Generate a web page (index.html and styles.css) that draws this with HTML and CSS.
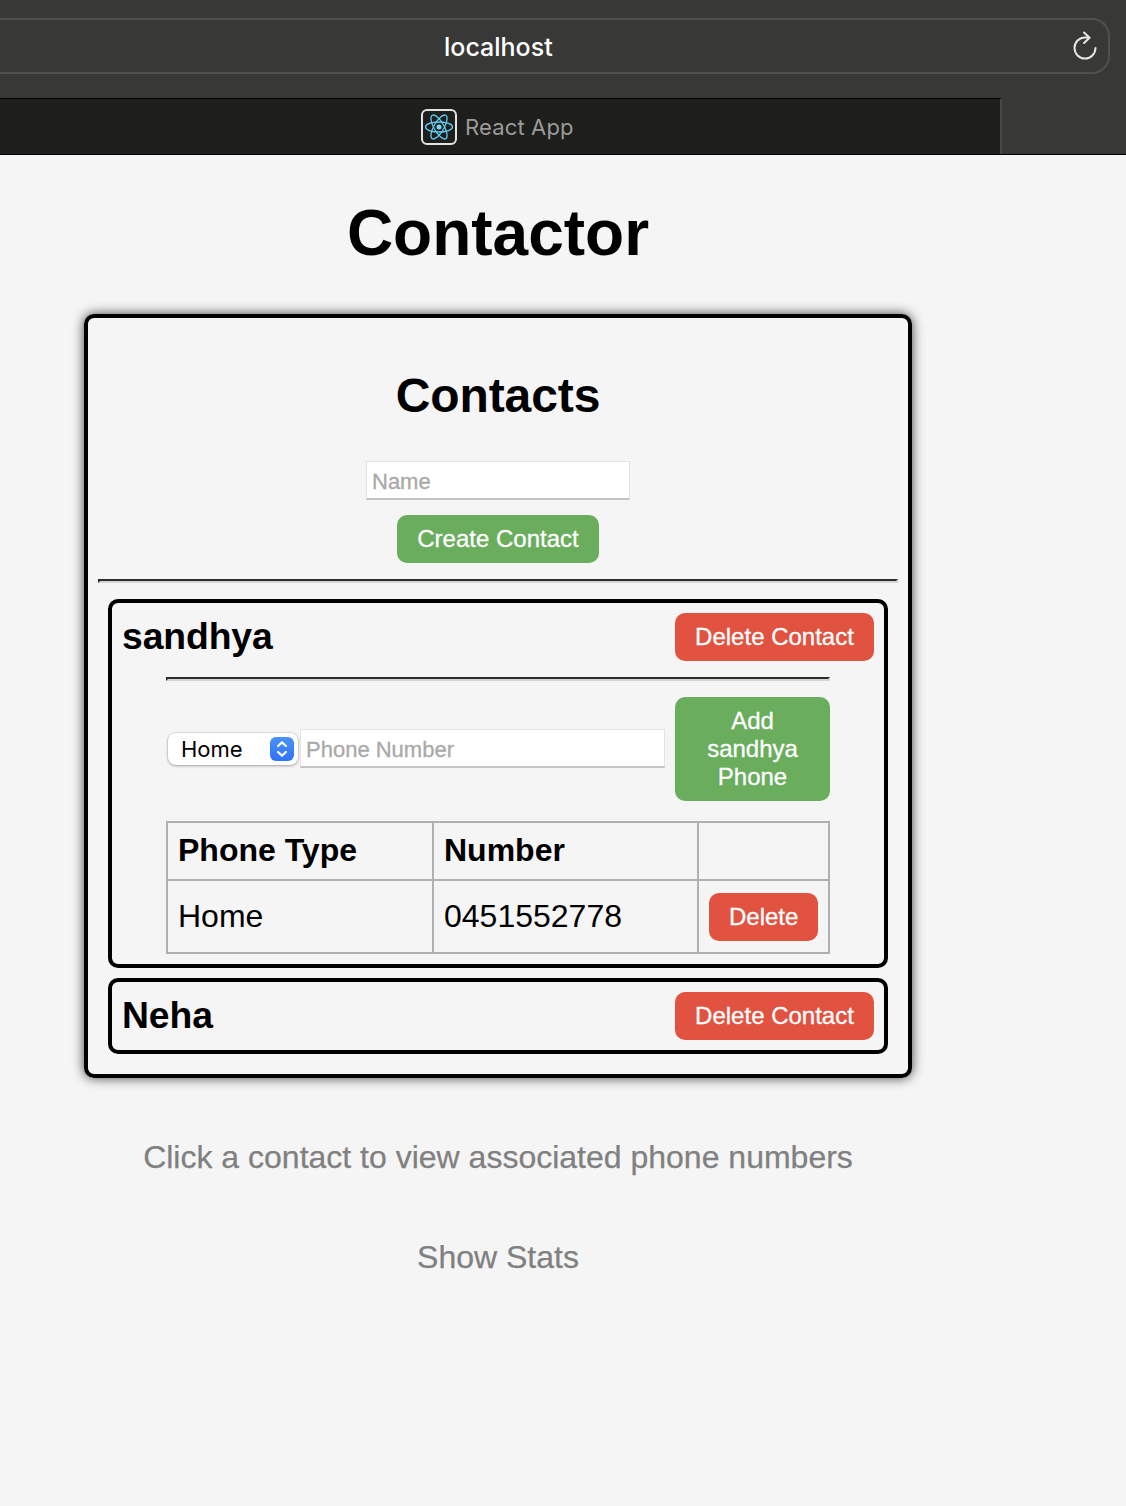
FILE: index.html
```html
<!DOCTYPE html>
<html lang="en">
<head>
<meta charset="utf-8">
<title>React App</title>
<link rel="stylesheet" href="styles.css">
</head>
<body>
<header class="browser">
  <div class="toolbar">
    <div class="address">
      <span class="address-text">localhost</span>
      <svg class="reload" width="28" height="32" viewBox="0 0 28 32" fill="none" stroke="#e6e6e4" stroke-width="2" stroke-linecap="round" stroke-linejoin="round"><path d="M24.5 18A10.5 10.5 0 1 1 14 7.5H18.5M13 2.5L18.6 7.7L13 13"/></svg>
    </div>
  </div>
  <div class="tabs">
    <div class="tab">
      <span class="favicon"><svg width="32" height="32" viewBox="-16 -16 32 32" fill="none" stroke="#61cdf3" stroke-width="1.3"><circle r="2.5" fill="#7ad8fa" stroke="none"/><ellipse rx="13.5" ry="5"/><ellipse rx="13.5" ry="5" transform="rotate(60)"/><ellipse rx="13.5" ry="5" transform="rotate(120)"/></svg></span>
      <span class="tab-text">React App</span>
    </div>
  </div>
</header>
<main class="page">
  <h1 class="title">Contactor</h1>
  <section class="contacts">
    <h2 class="heading">Contacts</h2>
    <form class="create">
      <input class="field name-field" type="text" placeholder="Name">
      <button class="button green" type="button">Create Contact</button>
    </form>
    <hr class="rule">
    <article class="contact">
      <div class="contact-head">
        <h3 class="contact-name">sandhya</h3>
        <button class="button red delete-contact" type="button">Delete Contact</button>
      </div>
      <div class="phones">
        <hr class="rule">
        <form class="add-phone">
          <div class="select"><span>Home</span><svg class="stepper" width="24" height="24" viewBox="0 0 24 24" fill="none" stroke="#fff" stroke-width="2.2" stroke-linecap="round" stroke-linejoin="round"><path d="M8 9L12 5.4L16 9M8 15L12 18.6L16 15"/></svg></div>
          <input class="field phone-field" type="text" placeholder="Phone Number">
          <button class="button green add-button" type="button">Add<br>sandhya<br>Phone</button>
        </form>
        <table class="phone-table">
          <colgroup><col class="col-type"><col class="col-number"><col></colgroup>
          <tr class="row-head"><th>Phone Type</th><th>Number</th><th></th></tr>
          <tr class="row-phone"><td>Home</td><td>0451552778</td><td class="actions"><button class="button red delete-phone" type="button">Delete</button></td></tr>
        </table>
      </div>
    </article>
    <article class="contact">
      <div class="contact-head">
        <h3 class="contact-name">Neha</h3>
        <button class="button red delete-contact" type="button">Delete Contact</button>
      </div>
    </article>
  </section>
  <p class="hint">Click a contact to view associated phone numbers</p>
  <p class="stats">Show Stats</p>
</main>
</body>
</html>
```
FILE: styles.css
```css
* { box-sizing: border-box; }
body {
  margin: 0;
  min-height: 1506px;
  background: #f5f5f5;
  color: #000;
  font-family: "Liberation Sans", Arial, sans-serif;
}
.browser {
  height: 155px;
  background: #383836;
  border-bottom: 1px solid #000;
  font-family: Inter, sans-serif;
}
.toolbar { height: 98px; padding: 18px 16px 0 0; }
.address {
  height: 56px;
  display: flex;
  align-items: center;
  justify-content: space-between;
  border: 2px solid #50504e;
  border-left: 0;
  border-radius: 0 18px 18px 0;
  padding: 0 9px 0 444px;
  color: #fff;
}
.address-text { margin-top: 1px; font-size: 25px; font-weight: 500; line-height: 30px; letter-spacing: 0; }
.reload { margin-top: 0; }
.tabs { height: 56px; }
.tab {
  width: 1002px;
  height: 56px;
  display: flex;
  align-items: center;
  gap: 8px;
  padding-left: 421px;
  background: #1e1e1c;
  border-top: 1px solid #000;
  border-right: 2px solid #484846;
}
.favicon {
  width: 36px;
  height: 36px;
  display: flex;
  border: 2px solid #e3e3e3;
  border-radius: 6px;
}
.tab-text { font-size: 22px; line-height: 28px; letter-spacing: 0.15px; color: #9b9b9a; }
.page {
  width: 996px;
  display: flex;
  flex-direction: column;
  align-items: center;
  text-align: center;
}
.title { margin: 41px 0 0; font-size: 64px; line-height: 74px; }
.contacts {
  width: 828px;
  height: 764px;
  margin-top: 44px;
  padding: 0 10px;
  border: 4px solid #000;
  border-radius: 10px;
  box-shadow: 0 0 12px rgba(0, 0, 0, 0.75);
}
.heading { margin: 50px 0 0; font-size: 48px; line-height: 56px; letter-spacing: -0.1px; }
.create {
  display: flex;
  flex-direction: column;
  align-items: center;
  gap: 15px;
  margin-top: 37px;
}
.field {
  height: 39px;
  margin: 0;
  padding: 3px 5px 0;
  border: 1px solid #e3e3e3;
  border-bottom: 2px solid #c4c4c4;
  background: #fff;
  font: 22px "Liberation Sans", Arial, sans-serif;
}
.field::placeholder { color: #a9a9a9; opacity: 1; -webkit-text-stroke: 0.3px #a9a9a9; }
.name-field { width: 264px; }
.button {
  height: 48px;
  margin: 0;
  padding: 0 20px;
  border: 0;
  border-radius: 10px;
  color: #fff;
  font: 24px/28px "Liberation Sans", Arial, sans-serif;
  -webkit-text-stroke: 0.3px #fff;
  white-space: nowrap;
}
.green { background: #69ad5d; }
.red { background: #e15241; }
.rule {
  height: 4px;
  margin: 16px 0 0;
  border: 2px solid;
  border-color: #2c2c2c #d6d4d5 #d6d4d5 #2c2c2c;
}
.contact {
  margin: 16px 10px 0;
  padding: 10px;
  border: 4px solid #000;
  border-radius: 10px;
}
.contact + .contact { margin-top: 10px; }
.contact-head { display: flex; justify-content: space-between; height: 48px; }
.contact-name { margin: 0; font-size: 37.3px; line-height: 46px; letter-spacing: -0.1px; }
.delete-contact { width: 199px; }
.phones { margin: 0 44px; }
.add-phone { display: flex; align-items: center; margin-top: 16px; }
.select {
  width: 130px;
  height: 32px;
  display: flex;
  align-items: center;
  justify-content: space-between;
  margin: 0 2px;
  padding: 0 4px 0 13px;
  border-radius: 8px;
  background: #fff;
  box-shadow: 0 0 1px 1px rgba(0, 0, 0, 0.07), 0 1px 3px rgba(0, 0, 0, 0.3);
  font: 22px/26px Inter, sans-serif;
}
.stepper { border-radius: 6px; background: linear-gradient(#4a91f7, #2f73f6); }
.phone-field { width: 365px; margin-top: -1px; }
.add-button { width: 155px; height: 104px; margin-left: 10px; }
.phone-table {
  width: 664px;
  margin-top: 20px;
  border-collapse: collapse;
  table-layout: fixed;
  font-size: 32px;
  line-height: 36px;
  text-align: left;
}
.col-type { width: 266px; }
.col-number { width: 265px; }
.phone-table th,
.phone-table td { padding: 0 10px 2px; border: 2px solid #b0b0b0; }
.phone-table .actions { padding-bottom: 0; }
.row-head { height: 58px; }
.row-phone { height: 73px; }
.delete-phone { display: block; width: 109px; }
.hint { margin: 61px 0 0; font-size: 32px; line-height: 36px; color: #808080; }
.stats { margin: 64px 0 0; font-size: 32px; line-height: 36px; color: #808080; }
.hint,
.stats { -webkit-text-stroke: 0.25px #808080; }
```
